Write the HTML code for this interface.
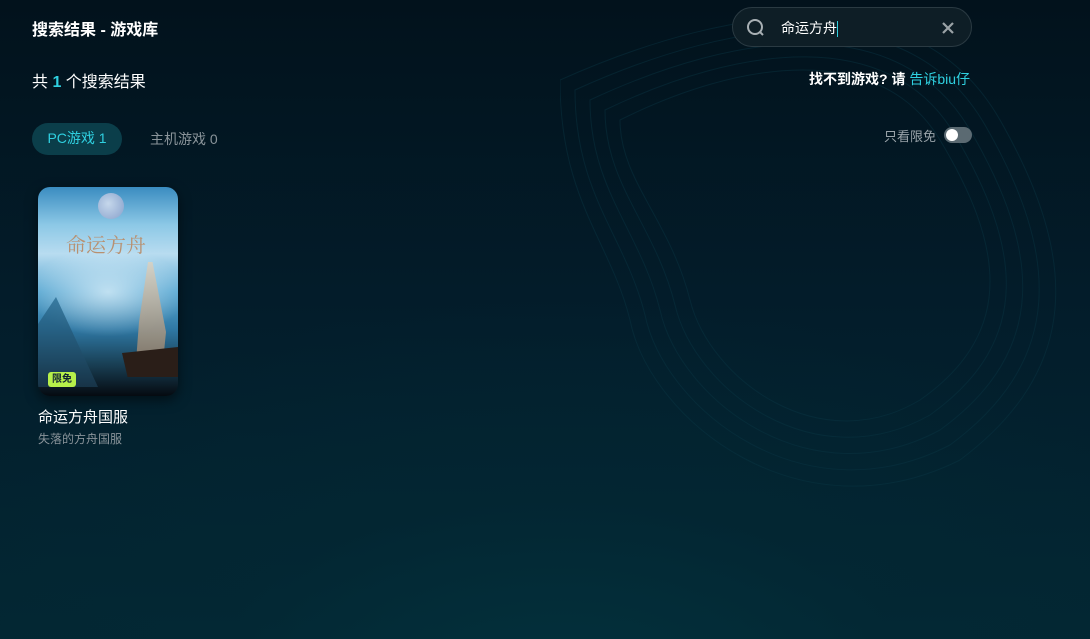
<!DOCTYPE html>
<html><head><meta charset="utf-8"><style>
*{margin:0;padding:0;box-sizing:border-box}
body{width:1090px;height:639px;overflow:hidden;font-family:"Liberation Sans","Noto Sans CJK SC",sans-serif;color:#fff;
background:radial-gradient(ellipse 900px 500px at 560px 700px,#03323d 0%,rgba(3,40,52,0.6) 40%,rgba(3,25,38,0) 80%),linear-gradient(180deg,#02121c 0%,#031d2b 50%,#032733 100%);position:relative}
.abs{position:absolute}
.t1{left:32px;top:16px;font-size:16px;font-weight:bold}
.t2{left:32px;top:68px;font-size:16px}
.t2 b{color:#2fd0e0}
.search{left:732px;top:7px;width:240px;height:40px;border-radius:20px;background:#0e1e26;border:1px solid #2a3a42}
.search span{position:absolute;left:48px;top:10px;font-size:14px}
.cur{display:inline-block;width:1px;height:16px;background:#2fd0e0;vertical-align:middle}
.help{left:809px;top:69px;font-size:14px;font-weight:bold}
.help em{font-style:normal;color:#2fd0e0;font-weight:normal}
.tab1{left:32px;top:123px;width:90px;height:32px;border-radius:16px;background:#0b3e4a;color:#2fd0e0;font-size:14px;line-height:31px;text-align:center}
.tab2{left:150px;top:129px;font-size:14px;color:#8a949a}
.free{left:884px;top:126px;font-size:13px;color:#9aa4aa}
.sw{left:944px;top:127px;width:28px;height:16px;border-radius:8px;background:#5b6a72}
.sw i{position:absolute;left:2px;top:2px;width:12px;height:12px;border-radius:50%;background:#fff}
.card{left:38px;top:187px;width:140px;height:209px;border-radius:12px;overflow:hidden;box-shadow:0 4px 12px rgba(0,0,0,.5);
background:linear-gradient(180deg,#3a8cc0 0%,#8cc8e6 18%,#b8dcf0 32%,#5aa8d2 50%,#2f78a4 68%,#1a4258 84%,#050a10 100%)}
.name{left:38px;top:406px;font-size:15px}
.sub{left:38px;top:430px;font-size:12px;color:#8a949a}
</style></head><body>
<svg class="abs" style="left:560px;top:0" width="530" height="639" viewBox="0 0 530 639">
<g fill="none" stroke="#0a3644" stroke-width="1" opacity="0.45">
<path d="M60 120 C180 60 320 40 380 140 C440 240 460 330 360 400 C260 460 150 380 130 300 C110 220 60 180 60 120Z"/>
<path d="M45 110 C180 45 330 25 395 135 C460 245 475 340 370 415 C255 480 135 390 115 305 C95 225 45 185 45 110Z"/>
<path d="M30 100 C180 30 340 10 410 130 C480 250 490 350 380 430 C250 500 120 400 100 310 C80 230 30 190 30 100Z"/>
<path d="M15 90 C180 15 350 -5 425 125 C500 255 505 360 390 445 C245 520 105 410 85 315 C65 235 15 195 15 90Z"/>
<path d="M0 80 C180 0 360 -20 440 120 C520 260 520 370 400 460 C240 540 90 420 70 320 C50 240 0 200 0 80Z"/>
</g></svg>
<div class="abs t1">搜索结果 - 游戏库</div>
<div class="abs t2">共 <b>1</b> 个搜索结果</div>
<div class="abs search">
<svg class="abs" style="left:13px;top:10px" width="20" height="20" viewBox="0 0 20 20"><circle cx="9" cy="9" r="7" fill="none" stroke="#a8b0b4" stroke-width="2"/><path d="M14 14l3 3" stroke="#a8b0b4" stroke-width="2"/></svg>
<span>命运方舟<i class="cur"></i></span>
<svg class="abs" style="left:208px;top:13px" width="14" height="14" viewBox="0 0 14 14"><path d="M2 2l10 10M12 2L2 12" stroke="#9aa2a6" stroke-width="2.2"/></svg>
</div>
<div class="abs help">找不到游戏? 请 <em>告诉biu仔</em></div>
<div class="abs tab1">PC游戏 1</div>
<div class="abs tab2">主机游戏 0</div>
<div class="abs free">只看限免</div>
<div class="abs sw"><i></i></div>
<div class="abs card">
<div class="abs" style="left:60px;top:6px;width:26px;height:26px;border-radius:50%;background:radial-gradient(circle at 40% 40%,#d8e0f0,#8a9cc8);opacity:.85"></div>
<div class="abs" style="left:-10px;top:60px;width:160px;height:90px;background:radial-gradient(ellipse at 50% 50%,rgba(235,248,255,.7),transparent 70%)"></div>
<div class="abs" style="left:28px;top:42px;font-size:20px;color:#b89070;font-family:'Noto Serif CJK SC',serif">命运方舟</div>
<div class="abs" style="left:0;top:110px;width:60px;height:90px;background:linear-gradient(180deg,#2a6e95,#1a3a50);clip-path:polygon(0 30%,30% 0,100% 100%,0 100%);opacity:.8"></div>
<div class="abs" style="left:98px;top:75px;width:30px;height:100px;background:linear-gradient(180deg,#d8d2c4,#8a7a68);clip-path:polygon(40% 0,55% 0,100% 70%,90% 100%,0 100%,10% 60%);opacity:.9"></div>
<div class="abs" style="left:84px;top:160px;width:56px;height:30px;background:#2a1e18;clip-path:polygon(0 20%,100% 0,100% 100%,10% 100%)"></div>
<div class="abs" style="left:10px;top:185px;width:28px;height:15px;border-radius:3px;background:#b6f04a;color:#123;font-size:10px;font-weight:bold;line-height:15px;text-align:center">限免</div>
</div>
<div class="abs name">命运方舟国服</div>
<div class="abs sub">失落的方舟国服</div>
</body></html>
